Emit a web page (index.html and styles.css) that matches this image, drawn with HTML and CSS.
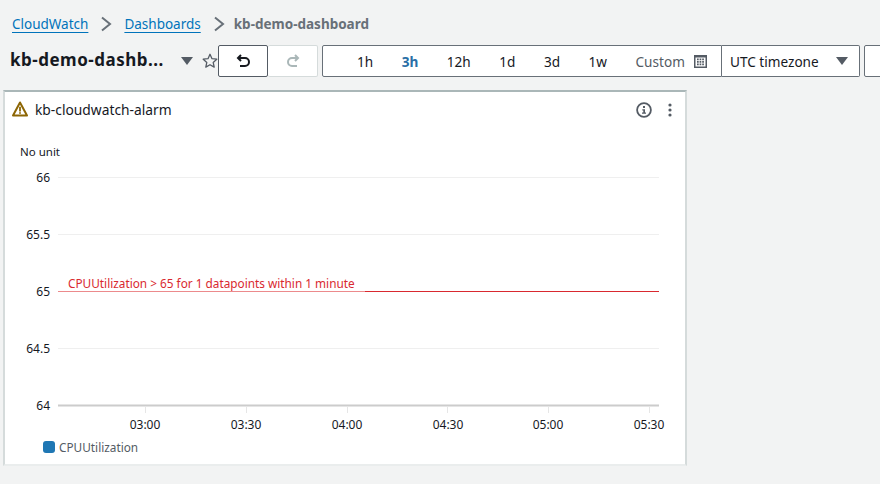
FILE: index.html
```html
<!DOCTYPE html>
<html lang="en">
<head>
    <meta charset="UTF-8">
    <title>kb-demo-dashboard</title>
    <link rel="stylesheet" href="styles.css">
</head>
<body>
    <nav class="crumbs">
        <a href="#">CloudWatch</a>
        <svg class="crumb-sep" width="12" height="16" viewBox="0 0 12 16"><path d="M2 1.500l8 6.500-8 6.500" fill="none" stroke="#687078" stroke-width="2"/></svg>
        <a href="#">Dashboards</a>
        <svg class="crumb-sep" width="12" height="16" viewBox="0 0 12 16"><path d="M2 1.500l8 6.500-8 6.500" fill="none" stroke="#687078" stroke-width="2"/></svg>
        <span class="crumb-current">kb-demo-dashboard</span>
    </nav>

    <div class="toolbar">
        <h1 class="dash-title">kb-demo-dashb...</h1>
        <svg class="title-caret" width="12" height="8" viewBox="0 0 12 8"><path d="M0 0h12L6 8z" fill="#545b64"/></svg>
        <svg class="star" width="16" height="16" viewBox="0 0 16 16"><path d="M8 1.300l2 4.400 4.800.5-3.600 3.200 1 4.700L8 11.700l-4.200 2.400 1-4.700L1.200 6.200 6 5.700z" fill="none" stroke="#545b64" stroke-width="1.300" stroke-linejoin="round"/></svg>

        <button class="btn btn-undo">
            <svg width="14" height="14" viewBox="0 0 14 14"><path d="M5 1L2 4l3 3M2 4h7a3.800 3.800 0 0 1 0 8H4" fill="none" stroke="#16191f" stroke-width="2"/></svg>
        </button>
        <button class="btn btn-redo">
            <svg width="14" height="14" viewBox="0 0 14 14"><path d="M9 1l3 3-3 3M12 4H6a3.800 3.800 0 0 0 0 8h5" fill="none" stroke="#aab7b8" stroke-width="2"/></svg>
        </button>

        <div class="range">
            <span>1h</span>
            <span class="active">3h</span>
            <span>12h</span>
            <span>1d</span>
            <span>3d</span>
            <span>1w</span>
            <span class="range-custom">
                Custom
                <svg width="13" height="13" viewBox="0 0 13 13">
                    <path d="M0 0h13v13H0z" fill="#545b64"/>
                    <path d="M1.500 2.500h10v9h-10z" fill="#fff"/>
                    <path d="M3 3.500h1.700v1.700H3zM5.600 3.500h1.700v1.700H5.600zM8.200 3.500h1.700v1.700H8.200zM3 6h1.700v1.700H3zM5.600 6h1.700v1.700H5.600zM8.200 6h1.700v1.700H8.200zM3 8.500h1.700v1.700H3zM5.600 8.500h1.700v1.700H5.600zM8.200 8.500h1.700v1.700H8.200z" fill="#545b64"/>
                </svg>
            </span>
        </div>
        <div class="tz">
            <span>UTC timezone</span>
            <svg width="12" height="8" viewBox="0 0 12 8"><path d="M0 0h12L6 8z" fill="#545b64"/></svg>
        </div>
        <div class="next-box"></div>
    </div>

    <section class="widget">
        <header class="widget-head">
            <svg class="warn" width="16" height="16" viewBox="0 0 16 16">
                <path d="M8 1.500L15 14.500H1z" fill="none" stroke="#8d6605" stroke-width="2" stroke-linejoin="round"/>
                <path d="M8 5.800v4.600M8 11.200v1.600" stroke="#8d6605" stroke-width="1.800"/>
            </svg>
            <h2 class="widget-title">kb-cloudwatch-alarm</h2>
            <svg class="info" width="16" height="16" viewBox="0 0 16 16">
                <circle cx="8" cy="8" r="6.900" fill="none" stroke="#545b64" stroke-width="1.800"/>
                <path d="M7 4h2v2H7zM6.300 7.200h2.700v3.300h1v1.300H6v-1.300h1.300V8.500h-1z" fill="#545b64"/>
            </svg>
            <svg class="dots" width="4" height="14" viewBox="0 0 4 14">
                <circle cx="2" cy="2" r="1.600" fill="#545b64"/>
                <circle cx="2" cy="7" r="1.600" fill="#545b64"/>
                <circle cx="2" cy="12" r="1.600" fill="#545b64"/>
            </svg>
        </header>

        <svg class="chart" width="680" height="298" viewBox="0 0 680 298">
            <g class="grid">
                <path d="M53 4.500h601M53 61.500h601M53 175.500h601"/>
            </g>
            <path d="M53 118.500h601" stroke="#d9292f" stroke-width="1"/>
            <path d="M53 118.500h307" stroke="#ec8a8c" stroke-width="1"/>
            <path d="M53 232.500h601" stroke="#cccccc" stroke-width="2"/>
            <path d="M140.500 234v6M241.500 234v6M342.500 234v6M442.500 234v6M543.500 234v6M644.500 234v6" stroke="#e6e6e6"/>

            <g class="y-labels">
                <text x="45" y="9">66</text>
                <text x="45" y="66">65.5</text>
                <text x="45" y="123">65</text>
                <text x="45" y="180">64.5</text>
                <text x="45" y="237">64</text>
            </g>
            <text class="alarm-label" x="63" y="115">CPUUtilization &gt; 65 for 1 datapoints within 1 minute</text>
            <g class="x-labels">
                <text x="140" y="256">03:00</text>
                <text x="241" y="256">03:30</text>
                <text x="342" y="256">04:00</text>
                <text x="443" y="256">04:30</text>
                <text x="543" y="256">05:00</text>
                <text x="644" y="256">05:30</text>
            </g>
        </svg>

        <div class="unit">No unit</div>
        <div class="legend">
            <span class="swatch"></span>
            <span>CPUUtilization</span>
        </div>
    </section>
</body>
</html>
```

FILE: styles.css
```css
html, body {
    height: 100%;
}

body {
    margin: 0;
    background-color: #f2f3f3;
    font-family: "Noto Sans", Arial, sans-serif;
    font-size: 13.6px;
    color: #16191f;
    overflow: hidden;
}

/* breadcrumb */
.crumbs {
    display: flex;
    align-items: center;
    height: 20px;
    padding: 14px 0 0 12px;
    font-size: 13.5px;
}

.crumbs a {
    color: #0073bb;
    text-decoration: underline;
    text-underline-offset: 3px;
}

.crumb-sep {
    margin: 0 12px;
}

.crumb-current {
    margin-left: -3px;
    color: #687078;
    font-weight: 700;
}

/* toolbar */
.toolbar {
    display: flex;
    align-items: center;
    height: 32px;
    margin-top: 11px;
    padding-left: 10px;
}

.toolbar > * {
    flex: none;
}

.dash-title {
    width: 164px;
    margin: 0 0 4px;
    font-size: 17px;
    font-weight: 700;
    letter-spacing: 0.5px;
    white-space: nowrap;
}

.title-caret {
    margin-left: 7px;
}

.star {
    margin-left: 9px;
}

.btn {
    display: flex;
    align-items: center;
    justify-content: center;
    width: 50px;
    height: 32px;
    padding: 0;
    background-color: #fff;
    border-radius: 2px;
}

.btn-undo {
    border: 1px solid #545b64;
}

.btn-redo {
    border: 1px solid #d5dbdb;
    border-left: 0;
}

.range {
    display: flex;
    align-items: center;
    gap: 28.5px;
    box-sizing: border-box;
    width: 400px;
    height: 32px;
    margin-left: 4px;
    padding-left: 34px;
    background-color: #fff;
    border: 1px solid #687078;
    border-radius: 2px 0 0 2px;
}

.range .active {
    color: #2a6ea6;
    font-weight: 700;
}

.range-custom {
    display: flex;
    align-items: center;
    gap: 9px;
    color: #545b64;
}

.tz {
    display: flex;
    align-items: center;
    justify-content: space-between;
    box-sizing: border-box;
    width: 138px;
    height: 32px;
    padding: 0 11px 0 8px;
    background-color: #fff;
    border: 1px solid #687078;
    border-left: 0;
    border-radius: 0 2px 2px 0;
}

.next-box {
    width: 40px;
    height: 32px;
    box-sizing: border-box;
    margin-left: 4px;
    background-color: #fff;
    border: 1px solid #687078;
    border-radius: 2px;
}

/* widget */
.widget {
    position: relative;
    box-sizing: border-box;
    width: 684px;
    height: 376px;
    margin: 13px 0 0 3px;
    background-color: #fff;
    border: 2px solid #d5dbdb;
    border-top-color: #aab7b8;
    border-bottom-color: #eaeded;
}

.widget-head {
    display: flex;
    align-items: center;
    height: 36px;
    padding: 0 13px 0 7px;
}

.warn {
    flex: none;
    margin-top: -2px;
}

.widget-title {
    flex: 1;
    margin: 0 0 2px 7px;
    font-size: 13.8px;
    font-weight: 400;
}

.dots {
    margin-left: 16px;
}

.unit {
    position: absolute;
    left: 15px;
    top: 52px;
    font-size: 11.5px;
}

.chart {
    position: absolute;
    left: 0;
    top: 81px;
    overflow: visible;
}

.chart text {
    font-family: "Noto Sans", Arial, sans-serif;
    font-size: 12px;
    fill: #16191f;
}

.grid path {
    stroke: #efefef;
    stroke-width: 1;
}

.y-labels text {
    text-anchor: end;
}

.x-labels text {
    text-anchor: middle;
}

.chart .alarm-label {
    font-size: 11.8px;
    fill: #d9292f;
}

.legend {
    position: absolute;
    left: 38px;
    top: 347px;
    display: flex;
    align-items: center;
    gap: 4px;
    font-size: 11.8px;
    color: #545b64;
}

.swatch {
    width: 12px;
    height: 12px;
    background-color: #1f77b4;
    border-radius: 3px;
}
```
